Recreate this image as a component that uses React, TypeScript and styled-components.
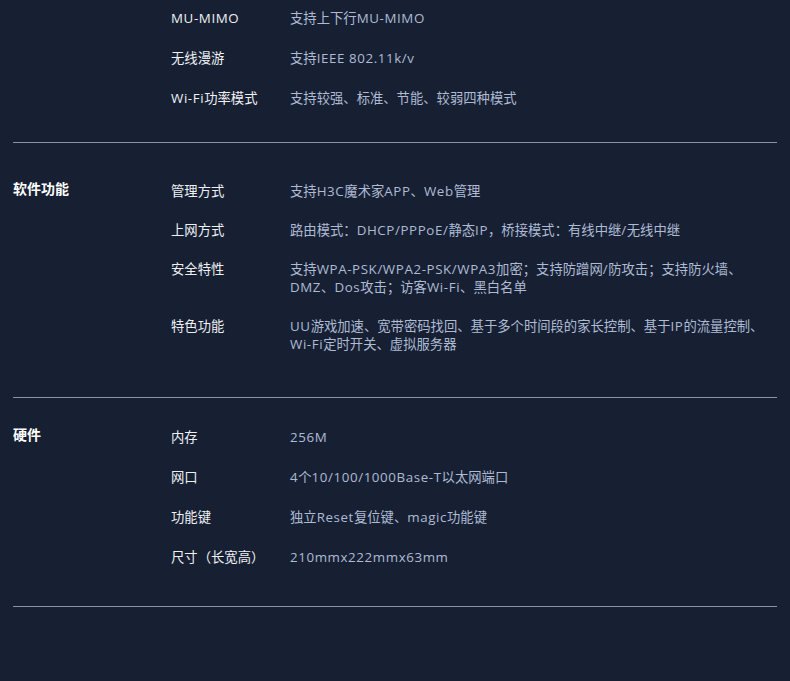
import React from "react";
import styled, { createGlobalStyle } from "styled-components";

const Global = createGlobalStyle`
  html, body { margin: 0; padding: 0; background: #172033; }
  body { font-family: "Open Sans", "Noto Sans CJK SC", sans-serif; }
`;

const Page = styled.div`
  width: 790px;
  min-height: 681px;
  background: #172033;
  padding: 0 13px;
  box-sizing: border-box;
`;

const Section = styled.section<{ $top: number; $bottom: number }>`
  display: grid;
  grid-template-columns: 158px 1fr;
  padding-top: ${(p) => p.$top}px;
  padding-bottom: ${(p) => p.$bottom}px;
  border-bottom: 1px solid #8d929c;
`;

const Title = styled.div`
  font-family: "Noto Sans CJK SC", sans-serif;
  font-size: 14px;
  font-weight: 700;
  color: #ffffff;
  line-height: 18px;
  margin-top: -3px;
`;

const Rows = styled.div<{ $gap: number }>`
  display: flex;
  flex-direction: column;
  gap: ${(p) => p.$gap}px;
`;

const Row = styled.div`
  display: grid;
  grid-template-columns: 119px 1fr;
  font-size: 13.33px;
  line-height: 18px;
`;

const Label = styled.div`
  color: #eef0f4;
`;

const Value = styled.div`
  color: #aebbd3;
  padding-right: 12px;
`;

const Latin = styled.span`
  letter-spacing: 0.6px;
`;

function renderText(s: string) {
  return s.split(/([A-Za-z0-9\-\/\. ]+)/).map((part, i) =>
    i % 2 === 1 ? <Latin key={i}>{part}</Latin> : part
  );
}

type Spec = { label: string; value: string };
type Group = { title: string; top: number; bottom: number; gap: number; rows: Spec[] };

const groups: Group[] = [
  {
    title: "",
    top: 9,
    bottom: 35,
    gap: 22,
    rows: [
      { label: "MU-MIMO", value: "支持上下行MU-MIMO" },
      { label: "无线漫游", value: "支持IEEE 802.11k/v" },
      { label: "Wi-Fi功率模式", value: "支持较强、标准、节能、较弱四种模式" },
    ],
  },
  {
    title: "软件功能",
    top: 39,
    bottom: 44,
    gap: 21,
    rows: [
      { label: "管理方式", value: "支持H3C魔术家APP、Web管理" },
      { label: "上网方式", value: "路由模式：DHCP/PPPoE/静态IP，桥接模式：有线中继/无线中继" },
      {
        label: "安全特性",
        value: "支持WPA-PSK/WPA2-PSK/WPA3加密；支持防蹭网/防攻击；支持防火墙、DMZ、Dos攻击；访客Wi-Fi、黑白名单",
      },
      {
        label: "特色功能",
        value: "UU游戏加速、宽带密码找回、基于多个时间段的家长控制、基于IP的流量控制、Wi-Fi定时开关、虚拟服务器",
      },
    ],
  },
  {
    title: "硬件",
    top: 30,
    bottom: 40,
    gap: 22,
    rows: [
      { label: "内存", value: "256M" },
      { label: "网口", value: "4个10/100/1000Base-T以太网端口" },
      { label: "功能键", value: "独立Reset复位键、magic功能键" },
      { label: "尺寸（长宽高）", value: "210mmx222mmx63mm" },
    ],
  },
];

export default function App() {
  return (
    <Page>
      <Global />
      {groups.map((g, i) => (
        <Section key={i} $top={g.top} $bottom={g.bottom}>
          <Title>{g.title}</Title>
          <Rows $gap={g.gap}>
            {g.rows.map((r) => (
              <Row key={r.label}>
                <Label>{renderText(r.label)}</Label>
                <Value>{renderText(r.value)}</Value>
              </Row>
            ))}
          </Rows>
        </Section>
      ))}
    </Page>
  );
}
